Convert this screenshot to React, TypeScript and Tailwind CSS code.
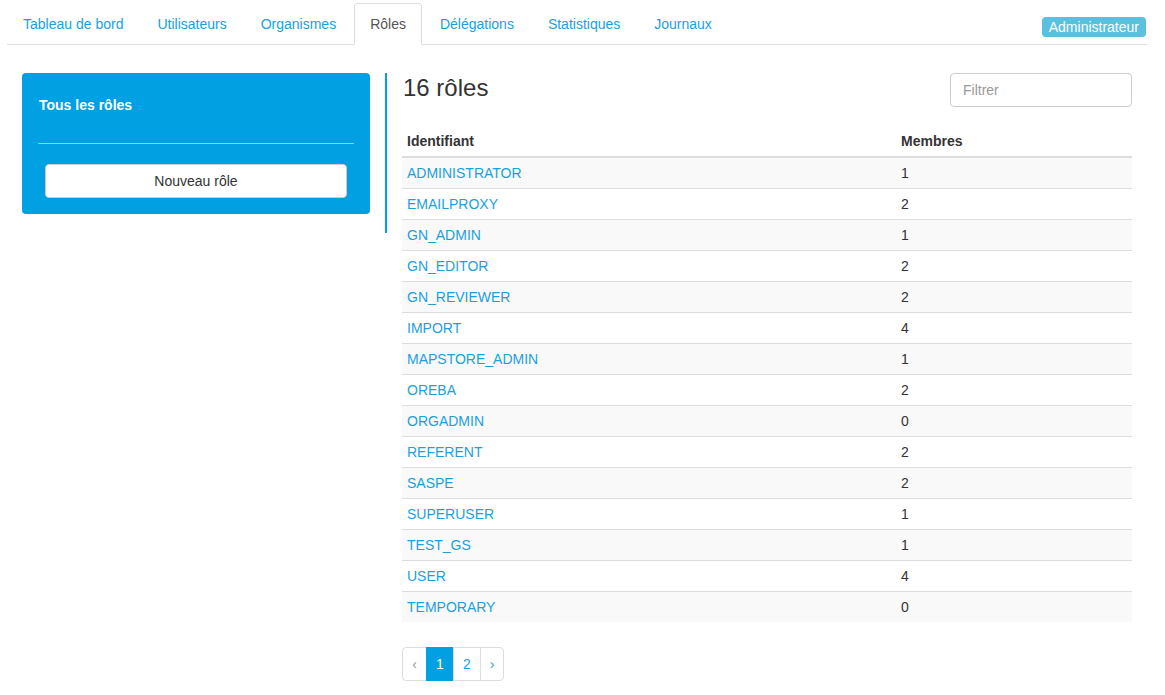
import React from "react";

const tabs = ["Tableau de bord", "Utilisateurs", "Organismes", "Rôles", "Délégations", "Statistiques", "Journaux"];

const roles: [string, number][] = [
    ["ADMINISTRATOR", 1],
    ["EMAILPROXY", 2],
    ["GN_ADMIN", 1],
    ["GN_EDITOR", 2],
    ["GN_REVIEWER", 2],
    ["IMPORT", 4],
    ["MAPSTORE_ADMIN", 1],
    ["OREBA", 2],
    ["ORGADMIN", 0],
    ["REFERENT", 2],
    ["SASPE", 2],
    ["SUPERUSER", 1],
    ["TEST_GS", 1],
    ["USER", 4],
    ["TEMPORARY", 0],
];

function Tabs() {
    return (
        <ul className="flex border-b border-[#ddd] ml-[7px] w-[1140px] pt-[3px]">
            {tabs.map((t) => {
                const active = t === "Rôles";
                return (
                    <li key={t} className="mr-[2px] -mb-px">
                        <a
                            href="#"
                            className={
                                active
                                    ? "block px-[15px] py-[10px] leading-5 border border-[#ddd] border-b-white rounded-t-[4px] bg-white text-[#555]"
                                    : "block px-[15px] py-[10px] leading-5 border border-transparent rounded-t-[4px] text-[#1a9fe0]"
                            }
                        >
                            {t}
                        </a>
                    </li>
                );
            })}
            <li className="ml-auto self-end mb-[7px] mr-px">
                <span className="block bg-[#5bc0de] text-white rounded-[4px] px-[7px] h-5 leading-5 text-[14px]">Administrateur</span>
            </li>
        </ul>
    );
}

function SidePanel() {
    return (
        <div className="ml-[22px] w-[348px] bg-[#00a0e3] rounded-[4px] px-4 pt-[22px] pb-4">
            <h4 className="text-white font-bold leading-5 text-[14px] pl-px">Tous les rôles</h4>
            <hr className="mt-[28px] border-t border-[#8fd3f1]" />
            <button className="mt-5 mx-[7px] w-[302px] h-[34px] bg-white rounded-[4px] border border-[#ccc] text-[#333] text-[14px]">
                Nouveau rôle
            </button>
        </div>
    );
}

function RolesTable() {
    return (
        <table className="w-[730px] mt-[19px] border-collapse text-[14px]">
            <thead>
                <tr className="border-b-2 border-[#ddd]">
                    <th className="w-[494px] text-left font-bold px-[5px] py-[5px] leading-5">Identifiant</th>
                    <th className="text-left font-bold px-[5px] py-[5px] leading-5">Membres</th>
                </tr>
            </thead>
            <tbody>
                {roles.map(([name, count], i) => (
                    <tr key={name} className={(i % 2 === 0 ? "bg-[#f9f9f9] " : "bg-white ") + (i < roles.length - 1 ? "border-b border-[#ddd]" : "")}>
                        <td className="px-[5px] py-[5px] leading-5">
                            <a href="#" className="text-[#1a9fe0]">{name}</a>
                        </td>
                        <td className="px-[5px] py-[5px] leading-5">{count}</td>
                    </tr>
                ))}
            </tbody>
        </table>
    );
}

function Pagination() {
    return (
        <ul className="flex mt-[25px] text-[14px] leading-5">
            <li className="h-[34px] w-[25px] flex items-center justify-center border border-[#ddd] rounded-l-[4px] text-[#999]">‹</li>
            <li className="h-[34px] w-[28px] flex items-center justify-center border border-[#00a0e3] bg-[#00a0e3] text-white -ml-px">1</li>
            <li className="h-[34px] w-[28px] flex items-center justify-center border border-[#ddd] text-[#1a9fe0] -ml-px">2</li>
            <li className="h-[34px] w-6 flex items-center justify-center border border-[#ddd] rounded-r-[4px] text-[#1a9fe0] -ml-px">›</li>
        </ul>
    );
}

export default function App() {
    return (
        <div className="min-h-screen bg-white text-[#333] text-[14px]" style={{ fontFamily: '"Liberation Sans", Arial, sans-serif' }}>
            <Tabs />
            <div className="flex items-start mt-[28px]">
                <SidePanel />
                <div className="ml-[15px] w-[2px] h-[160px] bg-[#00a0e3]" />
                <div className="ml-[15px] w-[730px]">
                    <div className="flex items-center justify-between h-[34px]">
                        <h2 className="text-[24px] leading-[34px] pl-px pb-[4px]">16 rôles</h2>
                        <input
                            placeholder="Filtrer"
                            className="w-[182px] h-[34px] border border-[#ccc] rounded-[4px] px-3 text-[14px] placeholder:text-[#999] outline-none"
                        />
                    </div>
                    <RolesTable />
                    <Pagination />
                </div>
            </div>
        </div>
    );
}
